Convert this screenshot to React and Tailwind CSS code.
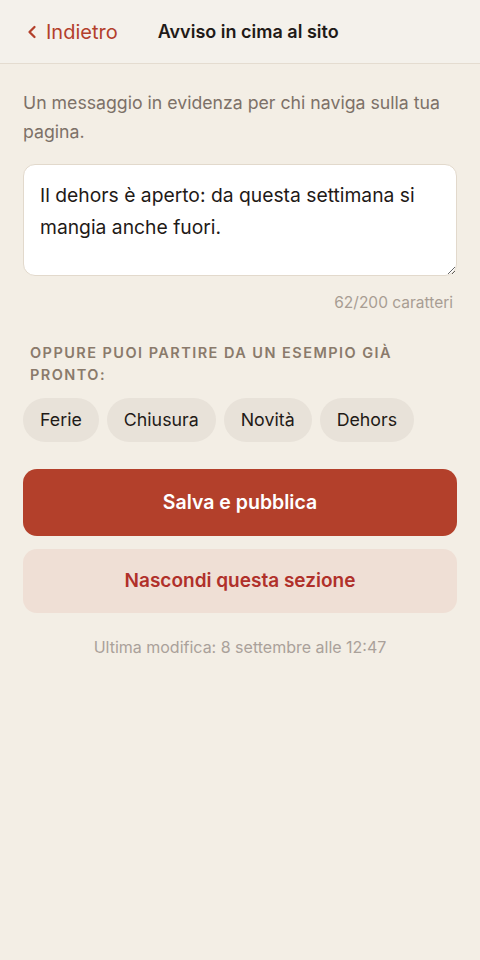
import React, { useState } from "react";
import { ChevronLeft } from "lucide-react";

const examples = ["Ferie", "Chiusura", "Novità", "Dehors"];

export default function App() {
  const [text, setText] = useState("Il dehors è aperto: da questa settimana si mangia anche fuori.");

  return (
    <div className="min-h-[960px] bg-[#f3eee5] text-[#1f1a17]" style={{ fontFamily: "Inter, 'Noto Sans', sans-serif" }}>
      <header className="flex h-[64px] items-center border-b border-[#e4dcd0] bg-[#f4f1eb] px-[23px]">
        <button className="flex items-center gap-[4px] text-[20px] text-[#b3402b]">
          <ChevronLeft size={20} strokeWidth={2.75} className="-ml-[1px]" />
          <span>Indietro</span>
        </button>
        <h1 className="ml-[40px] text-[18px] font-semibold text-[#1f1a17]">Avviso in cima al sito</h1>
      </header>

      <main className="px-[23px] pt-[24px]">
        <p className="text-[17.7px] leading-[29px] text-[#7d7168]">
          Un messaggio in evidenza per chi naviga sulla tua pagina.
        </p>

        <textarea
          value={text}
          onChange={(e) => setText(e.target.value)}
          className="mt-[18px] block h-[112px] w-full rounded-[12px] border border-[#e2d9cc] bg-white px-[16px] py-[14px] text-[19.3px] leading-[32px] text-[#1f1a17] outline-none"
        />
        <div className="mt-[15px] pr-[4px] text-right text-[15.5px] text-[#a89d93]">{text.length}/200 caratteri</div>

        <div className="mt-[28px] pl-[7px] pr-[50px] text-[14.5px] font-semibold uppercase leading-[22px] tracking-[0.1em] text-[#8a7a6b]">
          Oppure puoi partire da un esempio già pronto:
        </div>
        <div className="mt-[12px] flex flex-wrap gap-[8px]">
          {examples.map((ex) => (
            <button key={ex} onClick={() => setText(ex)} className="h-[44px] rounded-full bg-[#e8e2d9] px-[17px] text-[17.8px] text-[#1f1a17]">
              {ex}
            </button>
          ))}
        </div>

        <button className="mt-[27px] flex h-[67px] w-full items-center justify-center rounded-[14px] bg-[#b3402b] text-[19.5px] font-semibold text-white">
          Salva e pubblica
        </button>
        <button className="mt-[13px] flex h-[64px] w-full items-center justify-center rounded-[14px] bg-[#efdfd5] text-[19px] font-semibold text-[#b0302a]">
          Nascondi questa sezione
        </button>
        <div className="mt-[22px] text-center text-[16px] text-[#aaa19a]">Ultima modifica: 8 settembre alle 12:47</div>
      </main>
    </div>
  );
}
